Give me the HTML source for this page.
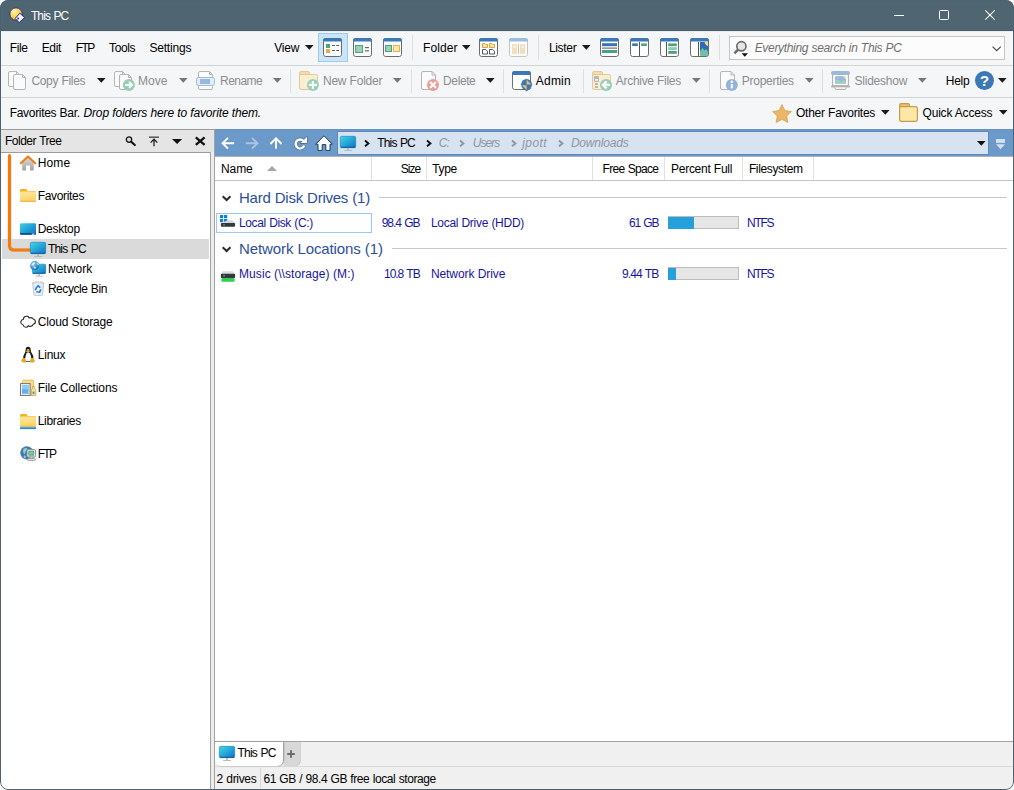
<!DOCTYPE html>
<html><head><meta charset="utf-8"><title>This PC</title>
<style>
html,body{margin:0;padding:0;background:#fff;}
body{width:1014px;height:790px;position:relative;overflow:hidden;font-family:'Liberation Sans', sans-serif;}
#win{position:absolute;left:0;top:0;width:1014px;height:790px;overflow:hidden;border-radius:8px;background:#f5f6f7;}
#frame{position:absolute;left:0;top:0;width:1012px;height:788px;border:1px solid #4c6270;border-radius:8px;pointer-events:none;}
.t{position:absolute;white-space:pre;font-family:'Liberation Sans', sans-serif;}
svg{position:absolute;overflow:visible;}
</style></head><body>
<div id="win">
<div style="position:absolute;left:0px;top:0px;width:1014px;height:31px;background:#4f6572;"></div>
<div style="position:absolute;left:0px;top:31px;width:1014px;height:98px;background:#f5f6f7;"></div>
<div style="position:absolute;left:0px;top:30px;width:1014px;height:1px;background:#485e6c;"></div>
<div style="position:absolute;left:1px;top:31px;width:1012px;height:1px;background:#e9eaeb;"></div>
<div style="position:absolute;left:1px;top:65px;width:1012px;height:1px;background:#d2d3d4;"></div>
<div style="position:absolute;left:1px;top:97px;width:1012px;height:1px;background:#d2d3d4;"></div>
<div style="position:absolute;left:0px;top:129px;width:1014px;height:661px;background:#f0f0f0;"></div>
<div style="position:absolute;left:0px;top:129px;width:215px;height:1px;background:#9c9c9c;"></div>
<div style="position:absolute;left:1px;top:130px;width:213px;height:22px;background:#e5e5e5;"></div>
<div style="position:absolute;left:1px;top:152px;width:210px;height:1px;background:#9c9c9c;"></div>
<div style="position:absolute;left:1px;top:153px;width:209px;height:636px;background:#fff;"></div>
<div style="position:absolute;left:210px;top:152px;width:1px;height:637px;background:#a3a3a3;"></div>
<div style="position:absolute;left:211px;top:153px;width:3px;height:636px;background:#ececec;"></div>
<div style="position:absolute;left:214px;top:129px;width:1px;height:660px;background:#a3a3a3;"></div>
<div style="position:absolute;left:2px;top:239px;width:207px;height:20px;background:#dadada;"></div>
<div style="position:absolute;left:215px;top:129px;width:798px;height:27px;background:#6b99c9;"></div>
<div style="position:absolute;left:215px;top:129px;width:798px;height:1px;background:#6a92c0;"></div>
<div style="position:absolute;left:215px;top:156px;width:798px;height:1px;background:#b2b2b2;"></div>
<div style="position:absolute;left:337px;top:131px;width:652px;height:24px;background:#d8e3f1;box-sizing:border-box;border:1px solid #5b89c0;"></div>
<div style="position:absolute;left:215px;top:157px;width:798px;height:584px;background:#fff;"></div>
<div style="position:absolute;left:371px;top:157px;width:1px;height:23px;background:#e2e2e2;"></div>
<div style="position:absolute;left:426px;top:157px;width:1px;height:23px;background:#e2e2e2;"></div>
<div style="position:absolute;left:592px;top:157px;width:1px;height:23px;background:#e2e2e2;"></div>
<div style="position:absolute;left:664px;top:157px;width:1px;height:23px;background:#e2e2e2;"></div>
<div style="position:absolute;left:742px;top:157px;width:1px;height:23px;background:#e2e2e2;"></div>
<div style="position:absolute;left:813px;top:157px;width:1px;height:23px;background:#e2e2e2;"></div>
<div style="position:absolute;left:215px;top:180px;width:798px;height:1px;background:#c6c6c6;"></div>
<div style="position:absolute;left:379px;top:197px;width:628px;height:1px;background:#c8c8c8;"></div>
<div style="position:absolute;left:392px;top:248px;width:615px;height:1px;background:#c8c8c8;"></div>
<div style="position:absolute;left:216px;top:213px;width:155px;height:19px;background:#fff;border:1px solid #99c9f5;box-sizing:content-box;width:154px;height:18px;"></div>
<div style="position:absolute;left:668px;top:216px;width:71px;height:13px;background:#e6e6e6;box-sizing:border-box;border:1px solid #bcbcbc;"></div>
<div style="position:absolute;left:668px;top:216.5px;width:26px;height:12px;background:#26a0da;"></div>
<div style="position:absolute;left:668px;top:267px;width:71px;height:13px;background:#e6e6e6;box-sizing:border-box;border:1px solid #bcbcbc;"></div>
<div style="position:absolute;left:668px;top:267.5px;width:8px;height:12px;background:#26a0da;"></div>
<div style="position:absolute;left:215px;top:741px;width:798px;height:1px;background:#a3a3a3;"></div>
<div style="position:absolute;left:215px;top:742px;width:798px;height:47px;background:#f0f0f0;"></div>
<div style="position:absolute;left:215px;top:766px;width:798px;height:1px;background:#d9d9d9;"></div>
<div style="position:absolute;left:284px;top:742px;width:16px;height:24px;background:#d8d8d8;border-radius:0 0 5px 0;box-shadow:0.6px 0 0 #bcbcbc;"></div>
<div style="position:absolute;left:215px;top:742px;width:68px;height:24px;background:#fff;border-radius:0 0 6px 6px;box-shadow:1px 0 1.5px #8e8e8e;"></div>
<div style="position:absolute;left:260px;top:768px;width:1px;height:20px;background:#d6d6d6;"></div>
<div style="position:absolute;left:894px;top:15px;width:10px;height:1px;background:#fff;"></div>
<div style="position:absolute;left:939px;top:10px;width:10px;height:10px;background:transparent;box-sizing:border-box;border:1px solid #fff;border-radius:1.5px;"></div>
<svg style="left:985px;top:10px;" width="10" height="10" viewBox="0 0 10 10"><path d="M0.3 0.3L9.7 9.7M9.7 0.3L0.3 9.7" stroke="#fff" stroke-width="1.1" fill="none"/></svg>
<svg style="left:9px;top:7px;" width="17" height="17" viewBox="0 0 17 17">
<defs><radialGradient id="dg43" cx="0.35" cy="0.3" r="0.8"><stop offset="0" stop-color="#fff3b0"/><stop offset="0.6" stop-color="#f7cf4a"/><stop offset="1" stop-color="#e9b530"/></radialGradient></defs>
<circle cx="7" cy="7" r="6.2" fill="url(#dg43)" stroke="#27277e" stroke-width="0.9"/>
<path d="M10.8 6.2L15.6 10.6L10.2 15.6L6.2 11.4Z" fill="#f3f3f6" stroke="#27277e" stroke-width="1"/>
<rect x="8.2" y="10.6" width="1.8" height="1.8" fill="#2a2ad0"/>
</svg>
<svg style="left:305.3px;top:45px;" width="8.6" height="4.8" viewBox="0 0 8.6 4.8"><path d="M0 0H8.6L4.3 4.8Z" fill="#1a1a1a"/></svg>
<svg style="left:461.5px;top:45px;" width="8.6" height="4.8" viewBox="0 0 8.6 4.8"><path d="M0 0H8.6L4.3 4.8Z" fill="#1a1a1a"/></svg>
<svg style="left:582.3000000000001px;top:45px;" width="8.6" height="4.8" viewBox="0 0 8.6 4.8"><path d="M0 0H8.6L4.3 4.8Z" fill="#1a1a1a"/></svg>
<svg style="left:96.5px;top:78px;" width="8.6" height="4.8" viewBox="0 0 8.6 4.8"><path d="M0 0H8.6L4.3 4.8Z" fill="#1a1a1a"/></svg>
<svg style="left:178.5px;top:78px;" width="8.6" height="4.8" viewBox="0 0 8.6 4.8"><path d="M0 0H8.6L4.3 4.8Z" fill="#777"/></svg>
<svg style="left:273.3px;top:78px;" width="8.6" height="4.8" viewBox="0 0 8.6 4.8"><path d="M0 0H8.6L4.3 4.8Z" fill="#777"/></svg>
<svg style="left:393.3px;top:78px;" width="8.6" height="4.8" viewBox="0 0 8.6 4.8"><path d="M0 0H8.6L4.3 4.8Z" fill="#777"/></svg>
<svg style="left:692.3000000000001px;top:78px;" width="8.6" height="4.8" viewBox="0 0 8.6 4.8"><path d="M0 0H8.6L4.3 4.8Z" fill="#777"/></svg>
<svg style="left:805.3000000000001px;top:78px;" width="8.6" height="4.8" viewBox="0 0 8.6 4.8"><path d="M0 0H8.6L4.3 4.8Z" fill="#777"/></svg>
<svg style="left:918.1px;top:78px;" width="8.6" height="4.8" viewBox="0 0 8.6 4.8"><path d="M0 0H8.6L4.3 4.8Z" fill="#777"/></svg>
<svg style="left:486.3px;top:78px;" width="8.6" height="4.8" viewBox="0 0 8.6 4.8"><path d="M0 0H8.6L4.3 4.8Z" fill="#1a1a1a"/></svg>
<svg style="left:998.3px;top:78px;" width="8.6" height="4.8" viewBox="0 0 8.6 4.8"><path d="M0 0H8.6L4.3 4.8Z" fill="#1a1a1a"/></svg>
<svg style="left:881.3px;top:110px;" width="8.6" height="4.8" viewBox="0 0 8.6 4.8"><path d="M0 0H8.6L4.3 4.8Z" fill="#1a1a1a"/></svg>
<svg style="left:998.5px;top:110px;" width="8.6" height="4.8" viewBox="0 0 8.6 4.8"><path d="M0 0H8.6L4.3 4.8Z" fill="#1a1a1a"/></svg>
<div style="position:absolute;left:412px;top:35px;width:1px;height:25px;background:#dedfe0;"></div>
<div style="position:absolute;left:538px;top:35px;width:1px;height:25px;background:#dedfe0;"></div>
<div style="position:absolute;left:719px;top:35px;width:1px;height:25px;background:#dedfe0;"></div>
<div style="position:absolute;left:290px;top:69px;width:1px;height:24px;background:#dedfe0;"></div>
<div style="position:absolute;left:411px;top:69px;width:1px;height:24px;background:#dedfe0;"></div>
<div style="position:absolute;left:503px;top:69px;width:1px;height:24px;background:#dedfe0;"></div>
<div style="position:absolute;left:583px;top:69px;width:1px;height:24px;background:#dedfe0;"></div>
<div style="position:absolute;left:709px;top:69px;width:1px;height:24px;background:#dedfe0;"></div>
<div style="position:absolute;left:822px;top:69px;width:1px;height:24px;background:#dedfe0;"></div>
<div style="position:absolute;left:318px;top:33px;width:30px;height:29px;background:#cce4f7;box-sizing:border-box;border:1px solid #99cdf8;"></div>
<svg style="left:323px;top:38px;" width="19" height="19" viewBox="0 0 19 19"><rect x="0.5" y="0.5" width="18" height="18" rx="2.2" fill="#fff" stroke="#6b6b6b"/>
<path d="M0 3.6V2.4Q0 0 2.4 0H16.6Q19 0 19 2.4V3.6Z" fill="#3b78b5"/><rect x="3" y="6" width="4" height="4" fill="#4aa37a"/><rect x="3" y="11" width="4" height="4" fill="#e6aa52"/>
<rect x="9" y="7" width="3" height="1" fill="#5a5a5a"/><rect x="13.3" y="7" width="2.7" height="1" fill="#5a5a5a"/>
<rect x="9" y="12" width="3" height="1" fill="#5a5a5a"/><rect x="13.3" y="12" width="2.7" height="1" fill="#5a5a5a"/></svg>
<svg style="left:353px;top:38px;" width="19" height="19" viewBox="0 0 19 19"><rect x="0.5" y="0.5" width="18" height="18" rx="2.2" fill="#fff" stroke="#6b6b6b"/>
<path d="M0 3.6V2.4Q0 0 2.4 0H16.6Q19 0 19 2.4V3.6Z" fill="#3b78b5"/><rect x="2.6" y="7.5" width="7" height="7" fill="#9bd1b9" stroke="#4aa37a"/>
<rect x="12" y="9" width="4" height="1.2" fill="#666"/><rect x="12" y="12.2" width="4" height="1.2" fill="#666"/></svg>
<svg style="left:383px;top:38px;" width="19" height="19" viewBox="0 0 19 19"><rect x="0.5" y="0.5" width="18" height="18" rx="2.2" fill="#fff" stroke="#6b6b6b"/>
<path d="M0 3.6V2.4Q0 0 2.4 0H16.6Q19 0 19 2.4V3.6Z" fill="#3b78b5"/><rect x="2.5" y="7.5" width="6" height="6" fill="#9bd1b9" stroke="#4aa37a"/>
<rect x="10.5" y="7.5" width="6" height="6" fill="#ffe9a8" stroke="#e9b44c"/></svg>
<svg style="left:479px;top:38px;" width="19" height="19" viewBox="0 0 19 19"><rect x="0.5" y="0.5" width="18" height="18" rx="2.2" fill="#fff" stroke="#6b6b6b"/>
<path d="M0 3.6V2.4Q0 0 2.4 0H16.6Q19 0 19 2.4V3.6Z" fill="#3b78b5"/><path d="M3.5 9.5V5.5H6L6.8 6.5H8.5V9.5Z" fill="#ffe2a0" stroke="#d9a441" stroke-width="1"/>
<path d="M10.5 9.5V5.5H13L13.8 6.5H15.5V9.5Z" fill="#ffe2a0" stroke="#d9a441" stroke-width="1"/>
<path d="M3.5 16V11.5H6.7L8.5 13.2V16Z" fill="#fff" stroke="#555" stroke-width="1"/>
<path d="M10.5 16V11.5H13.7L15.5 13.2V16Z" fill="#fff" stroke="#555" stroke-width="1"/></svg>
<svg style="left:509px;top:38px;" width="19" height="19" viewBox="0 0 19 19"><rect x="0.5" y="0.5" width="18" height="18" rx="2.2" fill="#fff" stroke="#c4c4c4"/>
<path d="M0 3.6V2.4Q0 0 2.4 0H16.6Q19 0 19 2.4V3.6Z" fill="#9dbbdb"/><rect x="2.8" y="6" width="5.4" height="10" rx="1" fill="#f1dfbd"/><rect x="10.8" y="6" width="5.4" height="10" rx="1" fill="#f1dfbd"/>
<rect x="4.6" y="7.5" width="2" height="2.5" fill="#faf3e6"/><rect x="12.6" y="7.5" width="2" height="2.5" fill="#faf3e6"/>
<rect x="9" y="5.5" width="1" height="11" fill="#c9c9c9"/></svg>
<svg style="left:600px;top:38px;" width="19" height="19" viewBox="0 0 19 19"><rect x="0.5" y="0.5" width="18" height="18" rx="2.2" fill="#fff" stroke="#6b6b6b"/>
<path d="M0 3.6V2.4Q0 0 2.4 0H16.6Q19 0 19 2.4V3.6Z" fill="#3b78b5"/><rect x="2" y="5.2" width="15" height="3" fill="#3a74b4"/><rect x="2" y="9.6" width="15" height="1" fill="#555"/><rect x="2" y="12" width="15" height="3" fill="#4aa37a"/></svg>
<svg style="left:630px;top:38px;" width="19" height="19" viewBox="0 0 19 19"><rect x="0.5" y="0.5" width="18" height="18" rx="2.2" fill="#fff" stroke="#6b6b6b"/>
<path d="M0 3.6V2.4Q0 0 2.4 0H16.6Q19 0 19 2.4V3.6Z" fill="#3b78b5"/><rect x="9" y="4" width="1" height="14" fill="#555"/><rect x="2.2" y="5.4" width="5.6" height="2.6" fill="#3a74b4"/><rect x="11.2" y="5.4" width="5.6" height="2.6" fill="#4aa37a"/></svg>
<svg style="left:660px;top:38px;" width="19" height="19" viewBox="0 0 19 19"><rect x="0.5" y="0.5" width="18" height="18" rx="2.2" fill="#fff" stroke="#6b6b6b"/>
<path d="M0 3.6V2.4Q0 0 2.4 0H16.6Q19 0 19 2.4V3.6Z" fill="#3b78b5"/><rect x="6" y="4" width="1" height="14" fill="#555"/><rect x="8.2" y="5.4" width="8.6" height="2.8" fill="#4aa37a"/><rect x="8.2" y="9.2" width="8.6" height="2.8" fill="#8fcbb0"/><rect x="8.2" y="13" width="8.6" height="2.8" fill="#4aa37a"/></svg>
<svg style="left:690px;top:38px;" width="19" height="19" viewBox="0 0 19 19"><rect x="0.5" y="0.5" width="18" height="18" rx="2.2" fill="#fff" stroke="#6b6b6b"/>
<path d="M0 3.6V2.4Q0 0 2.4 0H16.6Q19 0 19 2.4V3.6Z" fill="#3b78b5"/><rect x="8" y="4" width="1" height="14" fill="#555"/><rect x="10" y="4" width="8" height="13.5" fill="#2e6cb5"/>
<path d="M14.5 4H18V8Q15.5 7.5 14.5 4Z" fill="#f5df8a"/><path d="M10 13L12.5 10L14.5 12.5L16 11L18 13.5V17.5H10Z" fill="#6fc2a0"/></svg>
<div style="position:absolute;left:729px;top:36px;width:276px;height:24px;background:#fcfcfc;box-sizing:border-box;border:1px solid #c4c6c6;"></div>
<svg style="left:732px;top:39px;" width="18" height="19" viewBox="0 0 18 19"><circle cx="9.4" cy="7.3" r="4.6" fill="#e6e6e6" stroke="#6c6c6c" stroke-width="1.7"/>
<path d="M6.1 10.7L2.4 14.4" stroke="#6c6c6c" stroke-width="2.6" stroke-linecap="butt"/>
<path d="M9.6 14.2H16L12.8 17.7Z" fill="#111"/></svg>
<svg style="left:992px;top:46px;" width="10" height="6" viewBox="0 0 10 6"><path d="M0.6 0.6L4.7 4.7L8.8 0.6" stroke="#444" stroke-width="1.1" fill="none"/></svg>
<svg style="left:8px;top:71px;" width="18" height="19" viewBox="0 0 18 19"><g><path d="M2 0.5H8.5L11.5 3.5V14Q11.5 15.5 10 15.5H2Q0.5 15.5 0.5 14V2Q0.5 0.5 2 0.5Z" fill="#fbfbfb" stroke="#b5b5b5" stroke-width="1"/><path d="M8.5 0.5V3.5H11.5" fill="none" stroke="#b5b5b5" stroke-width="1"/></g><g transform="translate(5,3)"><path d="M2 0.5H9.5L12.5 3.5V14Q12.5 15.5 11 15.5H2Q0.5 15.5 0.5 14V2Q0.5 0.5 2 0.5Z" fill="#fbfbfb" stroke="#b5b5b5" stroke-width="1"/><path d="M9.5 0.5V3.5H12.5" fill="none" stroke="#b5b5b5" stroke-width="1"/></g></svg>
<svg style="left:114px;top:71px;" width="22" height="21" viewBox="0 0 22 21"><g><path d="M2 0.5H8.5L11.5 3.5V14Q11.5 15.5 10 15.5H2Q0.5 15.5 0.5 14V2Q0.5 0.5 2 0.5Z" fill="#fbfbfb" stroke="#b5b5b5" stroke-width="1"/><path d="M8.5 0.5V3.5H11.5" fill="none" stroke="#b5b5b5" stroke-width="1"/></g><g transform="translate(5,3)"><path d="M2 0.5H9.5L12.5 3.5V14Q12.5 15.5 11 15.5H2Q0.5 15.5 0.5 14V2Q0.5 0.5 2 0.5Z" fill="#fbfbfb" stroke="#b5b5b5" stroke-width="1"/><path d="M9.5 0.5V3.5H12.5" fill="none" stroke="#b5b5b5" stroke-width="1"/></g><circle cx="14.9" cy="13.9" r="6" fill="#97cfb6"/><path d="M11.2 13.9H17.8M15 10.9L18 13.9L15 16.9" stroke="#fff" stroke-width="2" fill="none"/></svg>
<svg style="left:196px;top:71px;" width="19" height="19" viewBox="0 0 19 19"><g transform="translate(2,0)"><path d="M2 0.5H11.5L14.5 3.5V17Q14.5 18.5 13 18.5H2Q0.5 18.5 0.5 17V2Q0.5 0.5 2 0.5Z" fill="#fbfbfb" stroke="#b5b5b5" stroke-width="1"/><path d="M11.5 0.5V3.5H14.5" fill="none" stroke="#b5b5b5" stroke-width="1"/></g><rect x="0.5" y="6.5" width="18" height="8" rx="2" fill="#e0eefb" stroke="#9bbbe0"/><rect x="4" y="8" width="10" height="5" fill="#9ab7d8"/></svg>
<svg style="left:299px;top:71px;" width="21" height="21" viewBox="0 0 21 21"><path d="M0.5 4V2Q0.5 0.5 2 0.5H9Q10.5 0.5 10.5 2V4Z" fill="#f3dcae" stroke="#e3c898"/><rect x="0.5" y="3.5" width="18" height="15" rx="1.6" fill="#fbeed0" stroke="#e3c898"/><circle cx="13.9" cy="13.9" r="6" fill="#9bd0b8"/><path d="M13.9 9.9V17.9M9.9 13.9H17.9" stroke="#fff" stroke-width="2.1" fill="none"/></svg>
<svg style="left:421px;top:71px;" width="20" height="21" viewBox="0 0 20 21"><g><path d="M2 0.5H11L14.5 4V17Q14.5 18.5 13 18.5H2Q0.5 18.5 0.5 17V2Q0.5 0.5 2 0.5Z" fill="#fbfbfb" stroke="#b5b5b5" stroke-width="1"/><path d="M11 0.5V4H14.5" fill="none" stroke="#b5b5b5" stroke-width="1"/></g><circle cx="12" cy="13.9" r="6" fill="#e7a096"/><path d="M9.1 11L14.9 16.8M14.9 11L9.1 16.8" stroke="#fff" stroke-width="2.2" fill="none"/></svg>
<svg style="left:512px;top:71px;" width="22" height="21" viewBox="0 0 22 21"><rect x="0.5" y="0.5" width="18" height="18" rx="2.2" fill="#fff" stroke="#6e6e6e" stroke-width="1"/><path d="M0 4V2.4Q0 0 2.4 0H16.6Q19 0 19 2.4V4Z" fill="#3b78b5"/><path d="M14.6 8L18.5 9.6L20 13.4L18.5 17.4L14.6 19.9L10.7 17.4L9.2 13.4L10.7 9.6Z" fill="#3878ba" stroke="#3878ba" stroke-width="0.5" stroke-linejoin="round"/><path d="M14.6 8.8V13.5H19.3Z" fill="#f4bc5a"/><path d="M14.6 14.2V19L9.9 14.2Z" fill="#f4bc5a"/></svg>
<svg style="left:592px;top:71px;" width="21" height="21" viewBox="0 0 21 21"><path d="M0.5 4V2Q0.5 0.5 2 0.5H9Q10.5 0.5 10.5 2V4Z" fill="#f3dcae" stroke="#e3c898"/><rect x="0.5" y="3.5" width="18" height="15" rx="1.6" fill="#fbeed0" stroke="#e3c898"/><rect x="2.1" y="5.2" width="4.7" height="5.6" fill="#a9aab4"/><rect x="3" y="8" width="2.9" height="1.7" fill="#fff"/><rect x="2.6" y="6.3" width="3.7" height="0.6" fill="#c4c5cc"/><rect x="3" y="12.2" width="2.9" height="1.7" fill="#a9aab4"/><rect x="3" y="15.1" width="2.9" height="1.7" fill="#a9aab4"/><circle cx="14" cy="13.9" r="6" fill="#97cfb6"/><path d="M17.8 13.9H11.4M14.6 10.4L11 13.9L14.6 17.4" stroke="#fff" stroke-width="2.4" fill="none"/></svg>
<svg style="left:720px;top:71px;" width="20" height="21" viewBox="0 0 20 21"><g><path d="M2 0.5H11L14.5 4V17Q14.5 18.5 13 18.5H2Q0.5 18.5 0.5 17V2Q0.5 0.5 2 0.5Z" fill="#fbfbfb" stroke="#b5b5b5" stroke-width="1"/><path d="M11 0.5V4H14.5" fill="none" stroke="#b5b5b5" stroke-width="1"/></g><circle cx="11.8" cy="13.9" r="6" fill="#94b4db"/><rect x="10.8" y="13" width="2" height="4.4" fill="#fff"/><circle cx="11.8" cy="10.8" r="1.2" fill="#fff"/></svg>
<svg style="left:831px;top:71px;" width="19" height="19" viewBox="0 0 19 19"><rect x="1.6" y="3" width="15.8" height="11.6" fill="#fff" stroke="#b3b3b3" stroke-width="1.2"/><rect x="0" y="0" width="19" height="4" rx="2" fill="#9cb9d9"/><rect x="4" y="5.2" width="11" height="7.6" fill="#9cb9d9"/><path d="M4 10.4L6.6 8L10 11.4L12.4 9.2L15 11.6V12.8H4Z" fill="#a3d3be"/><path d="M12 5.2H15V8.2Z" fill="#fde9a8"/><rect x="0" y="14.4" width="19" height="2.1" rx="1" fill="#b3b3b3"/><path d="M3.6 16.4L4.6 18.5H14.4L15.4 16.4" fill="#f0f0f0" stroke="#b3b3b3" stroke-width="1"/></svg>
<svg style="left:975px;top:71px;" width="19" height="19" viewBox="0 0 19 19"><circle cx="9.5" cy="9.5" r="9.5" fill="#3b78b5"/><text x="9.5" y="15" text-anchor="middle" font-family="Liberation Sans, sans-serif" font-weight="bold" font-size="15.4" fill="#fff">?</text></svg>
<svg style="left:772px;top:103.5px;" width="20" height="19" viewBox="0 0 20 19"><path d="M10 0.6L12.9 6.6L19.4 7.5L14.7 12L15.9 18.5L10 15.4L4.1 18.5L5.3 12L0.6 7.5L7.1 6.6Z" fill="#e9b766" stroke="#d4a256" stroke-width="0.8" stroke-linejoin="round"/></svg>
<svg style="left:899px;top:103px;" width="19" height="19" viewBox="0 0 19 19"><path d="M0.6 4V2Q0.6 0.6 2 0.6H9Q10.4 0.6 10.4 2V4Z" fill="#efbf6c" stroke="#c99a4e" stroke-width="1.2"/><rect x="0.6" y="3.6" width="17.8" height="14.8" rx="1.8" fill="#fee7a6" stroke="#c99a4e" stroke-width="1.2"/></svg>
<svg style="left:125px;top:136px;" width="12" height="11" viewBox="0 0 12 11"><circle cx="4" cy="3.6" r="2.7" fill="#dcdcdc" stroke="#111" stroke-width="1.3"/><path d="M6.2 5.8L9.8 9" stroke="#111" stroke-width="2.2" stroke-linecap="round"/></svg>
<svg style="left:149px;top:136px;" width="11" height="11" viewBox="0 0 11 11"><rect x="0" y="0.6" width="10" height="1.1" fill="#222"/><path d="M5 3.4V10.2M1.6 6.6L5 3.2L8.4 6.6" stroke="#222" stroke-width="1.3" fill="none"/></svg>
<svg style="left:172px;top:139px;" width="10.2" height="5" viewBox="0 0 10.2 5"><path d="M0 0H10.2L5.1 5Z" fill="#111"/></svg>
<svg style="left:195px;top:137px;" width="11" height="9" viewBox="0 0 11 9"><path d="M0.8 0.4L9.6 7.8M9.6 0.4L0.8 7.8" stroke="#111" stroke-width="2.3" fill="none"/></svg>
<svg style="left:221px;top:137px;" width="14" height="12" viewBox="0 0 14 12"><path d="M13.2 6.2H1.8M7 0.8L1.6 6.2L7 11.6" stroke="#fff" stroke-width="1.9" fill="none"/></svg>
<svg style="left:245px;top:137px;" width="14" height="12" viewBox="0 0 14 12"><path d="M0.8 6.2H12.2M7 0.8L12.4 6.2L7 11.6" stroke="#a9c5e4" stroke-width="1.9" fill="none"/></svg>
<svg style="left:269px;top:137px;" width="14" height="12" viewBox="0 0 14 12"><path d="M7 11.8V1.6M1.4 7L7 1.4L12.6 7" stroke="#fff" stroke-width="1.9" fill="none"/></svg>
<svg style="left:293px;top:135.5px;" width="15" height="15" viewBox="0 0 15 15"><g opacity="0.55"><path d="M10.6 5A4.5 4.5 0 1 0 11.3 9.6" stroke="#1f3a5c" stroke-width="3.6" fill="none"/><path d="M14 0.6V7.2H7.4Z" fill="#1f3a5c" stroke="#1f3a5c" stroke-width="1"/></g><path d="M10.6 5A4.5 4.5 0 1 0 11.3 9.6" stroke="#fff" stroke-width="2.5" fill="none"/><path d="M14 0.8V7H7.8Z" fill="#fff"/></svg>
<svg style="left:315px;top:134.5px;" width="18" height="16" viewBox="0 0 18 16"><path d="M9 0.8L17.4 9.2H15V15.4H10.8V9.6H7.2V15.4H3V9.2H0.6Z" fill="#fff" stroke="#1f3a5c" stroke-width="1" stroke-linejoin="miter"/></svg>
<svg style="left:340px;top:136px;" width="16" height="15" viewBox="0 0 16 15"><defs><linearGradient id="mg101" x1="0" y1="0" x2="1" y2="1"><stop offset="0" stop-color="#40d8e8"/><stop offset="0.55" stop-color="#22a2d6"/><stop offset="1" stop-color="#1570c0"/></linearGradient></defs>
<rect x="0.3" y="0.3" width="15.4" height="11.4" rx="1.4" fill="url(#mg101)" stroke="#1a7fae" stroke-width="0.6"/><rect x="0.6" y="10.8" width="14.8" height="1" rx="0.5" fill="#0f5aa0"/>
<rect x="7.2" y="12" width="1.6" height="2.4" fill="#b0b6bc"/><rect x="4.2" y="14" width="7.8" height="0.9" fill="#b0b6bc"/></svg>
<svg style="left:363.5px;top:140px;" width="6" height="7" viewBox="0 0 6 7"><path d="M1 0.6L4.4 3.4L1 6.2" stroke="#111" stroke-width="1.9" fill="none"/></svg>
<svg style="left:425.5px;top:140px;" width="6" height="7" viewBox="0 0 6 7"><path d="M1 0.6L4.4 3.4L1 6.2" stroke="#111" stroke-width="1.9" fill="none"/></svg>
<svg style="left:459.3px;top:140px;" width="6" height="7" viewBox="0 0 6 7"><path d="M1 0.6L4.4 3.4L1 6.2" stroke="#8d96a3" stroke-width="1.9" fill="none"/></svg>
<svg style="left:510.6px;top:140px;" width="6" height="7" viewBox="0 0 6 7"><path d="M1 0.6L4.4 3.4L1 6.2" stroke="#8d96a3" stroke-width="1.9" fill="none"/></svg>
<svg style="left:557.5px;top:140px;" width="6" height="7" viewBox="0 0 6 7"><path d="M1 0.6L4.4 3.4L1 6.2" stroke="#8d96a3" stroke-width="1.9" fill="none"/></svg>
<svg style="left:976.6px;top:141px;" width="8.6" height="4.8" viewBox="0 0 8.6 4.8"><path d="M0 0H8.6L4.3 4.8Z" fill="#111"/></svg>
<svg style="left:996px;top:139px;" width="9" height="11" viewBox="0 0 9 11"><rect x="0" y="0" width="9" height="3.9" fill="#d3e0f1"/><path d="M0 5.2H9L4.5 10.2Z" fill="#d3e0f1"/></svg>
<svg style="left:266.5px;top:166px;" width="10" height="5" viewBox="0 0 10 5"><path d="M0 5H10L5 0Z" fill="#a6a6a6"/></svg>
<svg style="left:222px;top:195px;" width="10" height="7" viewBox="0 0 10 7"><path d="M0.7 1.2L4.6 5L8.5 1.2" stroke="#2b2b2b" stroke-width="2" fill="none"/></svg>
<svg style="left:222px;top:246px;" width="10" height="7" viewBox="0 0 10 7"><path d="M0.7 1.2L4.6 5L8.5 1.2" stroke="#2b2b2b" stroke-width="2" fill="none"/></svg>
<svg style="left:6px;top:153.5px;" width="26" height="100" viewBox="0 0 26 100"><path d="M3.5 1.5V91.5Q3.5 96 8 96H24" stroke="#c9b6e8" stroke-width="4.2" fill="none" opacity="0.55"/><path d="M3.5 1.5V91.5Q3.5 96 8 96H24" stroke="#f57c00" stroke-width="3" fill="none" stroke-linecap="round"/></svg>
<svg style="left:20px;top:155px;" width="16" height="16" viewBox="0 0 16 16"><defs><linearGradient id="hg113" x1="0" y1="0" x2="0" y2="1"><stop offset="0" stop-color="#dcdcdc"/><stop offset="1" stop-color="#a2a2a2"/></linearGradient></defs>
<path d="M2.2 7.4L8 2.2L13.8 7.4V14.6Q13.8 15.6 12.8 15.6H10V10.6H6V15.6H3.2Q2.2 15.6 2.2 14.6Z" fill="url(#hg113)"/>
<path d="M0.8 8.2L8 1.6L15.2 8.2" stroke="#ee7a10" stroke-width="2" fill="none" stroke-linecap="round" stroke-linejoin="round"/></svg>
<svg style="left:20px;top:189px;" width="16" height="16" viewBox="0 0 16 16"><defs><linearGradient id="fg114" x1="0" y1="0" x2="0.3" y2="1"><stop offset="0" stop-color="#ffe9a2"/><stop offset="1" stop-color="#ffd466"/></linearGradient></defs>
<path d="M0 1.4Q0 0 1.4 0H5.6Q6.4 0 6.9 0.7L7.8 2H14.6Q16 2 16 3.4V5H0Z" fill="#f4b31c"/>
<rect x="0" y="2.6" width="16" height="10" rx="1" fill="url(#fg114)"/>
<rect x="0" y="11.8" width="16" height="0.9" rx="0.4" fill="#eea93a"/></svg>
<svg style="left:20px;top:223px;" width="16" height="12" viewBox="0 0 16 12"><defs><linearGradient id="dk115" x1="0" y1="0" x2="1" y2="1"><stop offset="0" stop-color="#3fd0e4"/><stop offset="0.55" stop-color="#1f9bd6"/><stop offset="1" stop-color="#1672bf"/></linearGradient></defs>
<rect x="0" y="0.3" width="16" height="11.4" rx="1.2" fill="url(#dk115)"/><path d="M0 10V10.5Q0 11.7 1.2 11.7H14.8Q16 11.7 16 10.5V10Z" fill="#0d4f93"/><rect x="11.8" y="10.6" width="2.8" height="1.1" fill="#e8f4ff"/></svg>
<svg style="left:30px;top:242px;" width="16" height="15" viewBox="0 0 16 15"><defs><linearGradient id="mg116" x1="0" y1="0" x2="1" y2="1"><stop offset="0" stop-color="#40d8e8"/><stop offset="0.55" stop-color="#22a2d6"/><stop offset="1" stop-color="#1570c0"/></linearGradient></defs>
<rect x="0.3" y="0.3" width="15.4" height="11.4" rx="1.4" fill="url(#mg116)" stroke="#1a7fae" stroke-width="0.6"/><rect x="0.6" y="10.8" width="14.8" height="1" rx="0.5" fill="#0f5aa0"/>
<rect x="7.2" y="12" width="1.6" height="2.4" fill="#b0b6bc"/><rect x="4.2" y="14" width="7.8" height="0.9" fill="#b0b6bc"/></svg>
<svg style="left:30px;top:261px;" width="16" height="16" viewBox="0 0 16 16"><defs><linearGradient id="ng117" x1="0" y1="0" x2="1" y2="1"><stop offset="0" stop-color="#40d8e8"/><stop offset="0.55" stop-color="#22a2d6"/><stop offset="1" stop-color="#1570c0"/></linearGradient>
<radialGradient id="gl117" cx="0.35" cy="0.3" r="0.8"><stop offset="0" stop-color="#8fd0f0"/><stop offset="0.6" stop-color="#3a8fd0"/><stop offset="1" stop-color="#1f63a8"/></radialGradient></defs>
<rect x="2.5" y="3.2" width="13.2" height="9.4" rx="1.2" fill="url(#ng117)" stroke="#1a7fae" stroke-width="0.6"/><rect x="2.8" y="11.8" width="12.6" height="0.9" rx="0.4" fill="#0f5aa0"/>
<rect x="8.3" y="12.8" width="1.6" height="2.2" fill="#b0b6bc"/><rect x="5.4" y="14.7" width="7.4" height="0.9" fill="#b0b6bc"/>
<circle cx="4.7" cy="4.7" r="4.6" fill="url(#gl117)"/>
<path d="M1.6 3.2Q3 1.4 5.2 1.2Q5.6 2.4 4.4 3Q3.6 4.6 2.4 4.4Q1.4 4.4 1.6 3.2ZM3.2 5.6Q4.6 5.2 5.6 6.2Q6.2 7.4 5 7.8Q3.6 7.2 3.2 5.6ZM6.8 1.6Q8.4 2.4 8.8 4Q8 4.6 7.4 3.6Q6.4 2.8 6.8 1.6Z" fill="#eef7ff" opacity="0.92"/></svg>
<svg style="left:32px;top:281px;" width="13" height="15" viewBox="0 0 13 15"><defs><linearGradient id="rb118" x1="0" y1="0" x2="1" y2="0"><stop offset="0" stop-color="#dfe4ea"/><stop offset="0.5" stop-color="#f6f8fa"/><stop offset="1" stop-color="#d9dfe6"/></linearGradient></defs>
<path d="M0.6 1.8H11.8L10.6 13.4Q10.5 14.4 9.5 14.4H2.9Q1.9 14.4 1.8 13.4Z" fill="url(#rb118)" stroke="#b9c1ca" stroke-width="0.8"/>
<path d="M0.8 1.6Q3 0.6 6.2 0.6Q9.4 0.6 11.6 1.6" stroke="#aeb6bf" stroke-width="0.8" fill="none" stroke-dasharray="1.6 0.8"/>
<path d="M4 7.2L6.2 4.6L8.2 6.8M8.8 8.4L7.6 11.2L4.4 10.8M3.4 9.2L4 7.2" stroke="#1e7fe0" stroke-width="1.6" fill="none"/></svg>
<svg style="left:20px;top:315px;" width="17" height="14" viewBox="0 0 17 14"><path d="M0.7 7Q1.2 4.6 3.4 4.3Q3.4 1.3 6.3 1.2Q8.3 1 9.2 2.9Q11.4 1.9 12.9 3.7Q15.3 4.4 15.5 6.6Q15.4 8.7 13.3 9.2Q12.7 11.4 10.4 11.4Q9 11.6 8.2 10.7Q7.4 12.4 5.6 12.2Q3.6 12 3.2 10Q0.9 9.5 0.7 7Z" fill="#fff" stroke="#2a2a2a" stroke-width="1.15" stroke-linejoin="round"/></svg>
<svg style="left:21px;top:346px;" width="15" height="17" viewBox="0 0 15 17"><path d="M4.7 3.4Q4.7 0.8 7.1 0.8Q9.6 0.8 9.6 3.6Q9.7 5.8 11 7.6Q12.8 10 12.3 12.4L2.1 12.6Q1.8 10.4 3.3 8Q4.7 5.8 4.7 3.4Z" fill="#1a1a1a"/>
<path d="M7.1 6.2Q5.6 6.8 4.7 9.4Q3.9 12.2 4.4 15.4H9.8Q10.8 12.2 9.8 9.4Q8.8 6.8 7.1 6.2Z" fill="#fff"/>
<rect x="4.8" y="15.2" width="4.8" height="0.8" fill="#3a3a3a"/>
<ellipse cx="7.1" cy="3.7" rx="1.3" ry="0.7" fill="#c9ccd0"/>
<ellipse cx="7" cy="5.4" rx="1.9" ry="1.1" fill="#e8b020"/>
<path d="M0.3 14.6Q0.5 12.2 2.6 12Q4.6 12.4 5.4 14.8Q5.6 16.6 3.4 16.7Q0.5 16.6 0.3 14.6Z" fill="#e5ab1a"/>
<path d="M9 14.8Q9.4 12.2 11.6 12Q13.3 12.2 13.8 14.4Q13.7 16.6 11 16.7Q9 16.6 9 14.8Z" fill="#e5ab1a"/></svg>
<svg style="left:20px;top:380px;" width="17" height="16" viewBox="0 0 17 16"><path d="M2.4 1.4Q2.4 0.2 3.6 0.2H12.4Q13.6 0.2 13.6 1.4V15.4H2.4Z" fill="#fbdc84" stroke="#e2b13c" stroke-width="0.8"/>
<rect x="0.5" y="3.6" width="9.6" height="11.8" fill="#f2f6fb" stroke="#6f747a" stroke-width="1"/>
<rect x="2" y="5.2" width="6.6" height="8.6" fill="#5fb0f0"/><rect x="2" y="5.2" width="6.6" height="4" fill="#8ccbf8"/>
<path d="M12.6 6.2H14.2V8.2L15.8 10V15.6H11.4V10L12.6 8.2Z" fill="#fbe09a" stroke="#d9a334" stroke-width="0.8"/><rect x="12.6" y="11.6" width="1.8" height="2.4" fill="#3b8fe0"/></svg>
<svg style="left:20px;top:414px;" width="16" height="16" viewBox="0 0 16 16"><defs><linearGradient id="fg122" x1="0" y1="0" x2="0.3" y2="1"><stop offset="0" stop-color="#ffe9a2"/><stop offset="1" stop-color="#ffd466"/></linearGradient></defs>
<path d="M0 1.4Q0 0 1.4 0H5.6Q6.4 0 6.9 0.7L7.8 2H14.6Q16 2 16 3.4V5H0Z" fill="#f4b31c"/>
<rect x="0" y="2.6" width="16" height="10" rx="1" fill="url(#fg122)"/>
<rect x="0" y="11.8" width="16" height="0.9" rx="0.4" fill="#eea93a"/><rect x="0" y="13.2" width="16" height="1.9" fill="#1f8fe3"/></svg>
<svg style="left:20px;top:446px;" width="17" height="16" viewBox="0 0 17 16"><circle cx="6.8" cy="6.8" r="6.6" fill="#3f79b9"/>
<path d="M3.4 3Q5.6 1.6 7.2 2.4Q6.8 4.4 5.4 5.4Q5.6 7.6 4.2 8.2Q2.4 6.4 3.4 3ZM4 9.6Q5.6 9.4 6 11Q5.4 12.6 4 12.2Q3.2 10.8 4 9.6Z" fill="#93d2b4"/>
<rect x="7" y="3.6" width="8.6" height="7.4" rx="1.2" fill="#fafafa" stroke="#8a8a8a" stroke-width="1"/>
<rect x="8.8" y="5.2" width="5" height="4" fill="#7fc6a2" stroke="#3f9a72" stroke-width="0.8"/>
<rect x="9.6" y="11" width="3.4" height="1.6" fill="#e4e4e4" stroke="#8a8a8a" stroke-width="0.7"/><rect x="7.6" y="12.6" width="7.6" height="1.8" rx="0.6" fill="#f0f0f0" stroke="#8a8a8a" stroke-width="0.8"/></svg>
<svg style="left:220px;top:215px;" width="16" height="13" viewBox="0 0 16 13"><rect x="0" y="0" width="3.2" height="3.2" fill="#0c80da"/><rect x="4" y="0" width="3.2" height="3.2" fill="#0c80da"/>
<rect x="0" y="4" width="3.2" height="3.2" fill="#0c80da"/><rect x="4" y="4" width="3.2" height="3.2" fill="#0c80da"/>
<path d="M7.6 5.2H12.6L15 8.2H1Z" fill="#d3d6da"/><rect x="0.9" y="8" width="14.2" height="3.8" rx="0.8" fill="#34373c"/><rect x="3.4" y="9.3" width="1.3" height="1.2" fill="#4be36e"/></svg>
<svg style="left:220px;top:270px;" width="16" height="13" viewBox="0 0 16 13"><path d="M3 1.2H12.8L15 4H1Z" fill="#d9dcdf"/><rect x="0.9" y="3.8" width="14.2" height="4.2" rx="0.8" fill="#34373c"/><rect x="3.4" y="5.2" width="1.3" height="1.2" fill="#4be36e"/>
<rect x="0" y="9.6" width="16" height="0.8" fill="#b7bcc1"/><rect x="1.6" y="7.9" width="12.8" height="3.9" rx="0.6" fill="#2fcf52"/></svg>
<svg style="left:219px;top:746px;" width="16" height="15" viewBox="0 0 16 15"><defs><linearGradient id="mg126" x1="0" y1="0" x2="1" y2="1"><stop offset="0" stop-color="#40d8e8"/><stop offset="0.55" stop-color="#22a2d6"/><stop offset="1" stop-color="#1570c0"/></linearGradient></defs>
<rect x="0.3" y="0.3" width="15.4" height="11.4" rx="1.4" fill="url(#mg126)" stroke="#1a7fae" stroke-width="0.6"/><rect x="0.6" y="10.8" width="14.8" height="1" rx="0.5" fill="#0f5aa0"/>
<rect x="7.2" y="12" width="1.6" height="2.4" fill="#b0b6bc"/><rect x="4.2" y="14" width="7.8" height="0.9" fill="#b0b6bc"/></svg>
<svg style="left:287px;top:750px;" width="8" height="8" viewBox="0 0 8 8"><path d="M4 0.2V7.8M0.2 4H7.8" stroke="#6c6c6c" stroke-width="2" fill="none"/></svg>
<span class="t" style="left:30.9px;top:9.8px;font-size:12px;line-height:12px;letter-spacing:-0.865px;word-spacing:0.865px;color:#fff;">This PC</span>
<span class="t" style="left:9.7px;top:41.8px;font-size:12px;line-height:12px;letter-spacing:-0.361px;word-spacing:0.361px;color:#000;">File</span>
<span class="t" style="left:41.7px;top:41.8px;font-size:12px;line-height:12px;letter-spacing:-0.322px;word-spacing:0.322px;color:#000;">Edit</span>
<span class="t" style="left:75.8px;top:41.8px;font-size:12px;line-height:12px;letter-spacing:-1.557px;word-spacing:1.557px;color:#000;">FTP</span>
<span class="t" style="left:109.0px;top:41.8px;font-size:12px;line-height:12px;letter-spacing:-0.363px;word-spacing:0.363px;color:#000;">Tools</span>
<span class="t" style="left:149.4px;top:41.8px;font-size:12px;line-height:12px;letter-spacing:-0.195px;word-spacing:0.195px;color:#000;">Settings</span>
<span class="t" style="left:274.3px;top:41.8px;font-size:12px;line-height:12px;letter-spacing:-0.249px;word-spacing:0.249px;color:#000;">View</span>
<span class="t" style="left:423.0px;top:41.8px;font-size:12px;line-height:12px;letter-spacing:0.097px;word-spacing:-0.097px;color:#000;">Folder</span>
<span class="t" style="left:548.9px;top:41.8px;font-size:12px;line-height:12px;letter-spacing:-0.307px;word-spacing:0.307px;color:#000;">Lister</span>
<span class="t" style="left:754.7px;top:41.8px;font-size:12px;line-height:12px;letter-spacing:-0.326px;word-spacing:0.326px;color:#707070;font-style:italic;">Everything search in This PC</span>
<span class="t" style="left:31.4px;top:74.8px;font-size:12px;line-height:12px;letter-spacing:-0.310px;word-spacing:0.310px;color:#8b8d92;">Copy Files</span>
<span class="t" style="left:138.0px;top:74.8px;font-size:12px;line-height:12px;letter-spacing:0.039px;word-spacing:-0.039px;color:#8b8d92;">Move</span>
<span class="t" style="left:220.1px;top:74.8px;font-size:12px;line-height:12px;letter-spacing:-0.577px;word-spacing:0.577px;color:#8b8d92;">Rename</span>
<span class="t" style="left:323.0px;top:74.8px;font-size:12px;line-height:12px;letter-spacing:-0.240px;word-spacing:0.240px;color:#8b8d92;">New Folder</span>
<span class="t" style="left:443.1px;top:74.8px;font-size:12px;line-height:12px;letter-spacing:-0.398px;word-spacing:0.398px;color:#8b8d92;">Delete</span>
<span class="t" style="left:535.8px;top:74.8px;font-size:12px;line-height:12px;letter-spacing:0.217px;word-spacing:-0.217px;color:#000;">Admin</span>
<span class="t" style="left:615.8px;top:74.8px;font-size:12px;line-height:12px;letter-spacing:-0.299px;word-spacing:0.299px;color:#8b8d92;">Archive Files</span>
<span class="t" style="left:741.8px;top:74.8px;font-size:12px;line-height:12px;letter-spacing:-0.270px;word-spacing:0.270px;color:#8b8d92;">Properties</span>
<span class="t" style="left:854.6px;top:74.8px;font-size:12px;line-height:12px;letter-spacing:-0.245px;word-spacing:0.245px;color:#8b8d92;">Slideshow</span>
<span class="t" style="left:945.8px;top:74.8px;font-size:12px;line-height:12px;letter-spacing:-0.272px;word-spacing:0.272px;color:#000;">Help</span>
<span class="t" style="left:9.7px;top:106.8px;font-size:12px;line-height:12px;letter-spacing:-0.310px;word-spacing:0.310px;color:#000;">Favorites Bar.</span>
<span class="t" style="left:83.5px;top:106.8px;font-size:12px;line-height:12px;letter-spacing:-0.153px;word-spacing:0.153px;color:#000;font-style:italic;">Drop folders here to favorite them.</span>
<span class="t" style="left:796.0px;top:106.8px;font-size:12px;line-height:12px;letter-spacing:-0.257px;word-spacing:0.257px;color:#000;">Other Favorites</span>
<span class="t" style="left:922.6px;top:106.8px;font-size:12px;line-height:12px;letter-spacing:-0.221px;word-spacing:0.221px;color:#000;">Quick Access</span>
<span class="t" style="left:5.0px;top:134.8px;font-size:12px;line-height:12px;letter-spacing:-0.496px;word-spacing:0.496px;color:#000;">Folder Tree</span>
<span class="t" style="left:377.2px;top:136.8px;font-size:12px;line-height:12px;letter-spacing:-0.815px;word-spacing:0.815px;color:#000;">This PC</span>
<span class="t" style="left:438.7px;top:136.8px;font-size:12px;line-height:12px;letter-spacing:-0.900px;word-spacing:0.900px;color:#8d96a3;font-style:italic;">C:</span>
<span class="t" style="left:472.8px;top:136.8px;font-size:12px;line-height:12px;letter-spacing:-0.949px;word-spacing:0.949px;color:#8d96a3;font-style:italic;">Users</span>
<span class="t" style="left:522.3px;top:136.8px;font-size:12px;line-height:12px;letter-spacing:0.403px;word-spacing:-0.403px;color:#8d96a3;font-style:italic;">jpott</span>
<span class="t" style="left:570.9px;top:136.8px;font-size:12px;line-height:12px;letter-spacing:-0.186px;word-spacing:0.186px;color:#8d96a3;font-style:italic;">Downloads</span>
<span class="t" style="left:221.0px;top:162.8px;font-size:12px;line-height:12px;letter-spacing:-0.079px;word-spacing:0.079px;color:#000;">Name</span>
<span class="t" style="left:400.7px;top:162.8px;font-size:12px;line-height:12px;letter-spacing:-0.986px;word-spacing:0.986px;color:#000;">Size</span>
<span class="t" style="left:432.2px;top:162.8px;font-size:12px;line-height:12px;letter-spacing:-0.354px;word-spacing:0.354px;color:#000;">Type</span>
<span class="t" style="left:602.6px;top:162.8px;font-size:12px;line-height:12px;letter-spacing:-0.716px;word-spacing:0.716px;color:#000;">Free Space</span>
<span class="t" style="left:671.0px;top:162.8px;font-size:12px;line-height:12px;letter-spacing:-0.266px;word-spacing:0.266px;color:#000;">Percent Full</span>
<span class="t" style="left:748.9px;top:162.8px;font-size:12px;line-height:12px;letter-spacing:-0.364px;word-spacing:0.364px;color:#000;">Filesystem</span>
<span class="t" style="left:239.0px;top:190.3px;font-size:15px;line-height:15px;letter-spacing:-0.242px;word-spacing:0.242px;color:#2b5098;">Hard Disk Drives (1)</span>
<span class="t" style="left:239.0px;top:241.3px;font-size:15px;line-height:15px;letter-spacing:-0.106px;word-spacing:0.106px;color:#2b5098;">Network Locations (1)</span>
<span class="t" style="left:239.0px;top:216.8px;font-size:12px;line-height:12px;letter-spacing:-0.376px;word-spacing:0.376px;color:#1616a0;">Local Disk (C:)</span>
<span class="t" style="left:381.7px;top:216.8px;font-size:12px;line-height:12px;letter-spacing:-1.022px;word-spacing:1.022px;color:#1616a0;">98.4 GB</span>
<span class="t" style="left:430.9px;top:216.8px;font-size:12px;line-height:12px;letter-spacing:-0.284px;word-spacing:0.284px;color:#1616a0;">Local Drive (HDD)</span>
<span class="t" style="left:628.9px;top:216.8px;font-size:12px;line-height:12px;letter-spacing:-1.133px;word-spacing:1.133px;color:#1616a0;">61 GB</span>
<span class="t" style="left:747.0px;top:216.8px;font-size:12px;line-height:12px;letter-spacing:-1.236px;word-spacing:1.236px;color:#1616a0;">NTFS</span>
<span class="t" style="left:239.0px;top:267.8px;font-size:12px;line-height:12px;letter-spacing:0.084px;word-spacing:-0.084px;color:#1616a0;">Music (\\storage) (M:)</span>
<span class="t" style="left:384.1px;top:267.8px;font-size:12px;line-height:12px;letter-spacing:-1.052px;word-spacing:1.052px;color:#1616a0;">10.8 TB</span>
<span class="t" style="left:430.9px;top:267.8px;font-size:12px;line-height:12px;letter-spacing:-0.080px;word-spacing:0.080px;color:#1616a0;">Network Drive</span>
<span class="t" style="left:622.0px;top:267.8px;font-size:12px;line-height:12px;letter-spacing:-0.902px;word-spacing:0.902px;color:#1616a0;">9.44 TB</span>
<span class="t" style="left:747.0px;top:267.8px;font-size:12px;line-height:12px;letter-spacing:-1.236px;word-spacing:1.236px;color:#1616a0;">NTFS</span>
<span class="t" style="left:37.7px;top:156.8px;font-size:12px;line-height:12px;letter-spacing:0.171px;word-spacing:-0.171px;color:#000;">Home</span>
<span class="t" style="left:37.7px;top:189.8px;font-size:12px;line-height:12px;letter-spacing:-0.329px;word-spacing:0.329px;color:#000;">Favorites</span>
<span class="t" style="left:37.7px;top:222.8px;font-size:12px;line-height:12px;letter-spacing:-0.276px;word-spacing:0.276px;color:#000;">Desktop</span>
<span class="t" style="left:47.9px;top:242.8px;font-size:12px;line-height:12px;letter-spacing:-0.765px;word-spacing:0.765px;color:#000;">This PC</span>
<span class="t" style="left:47.9px;top:262.8px;font-size:12px;line-height:12px;letter-spacing:0.069px;word-spacing:-0.069px;color:#000;">Network</span>
<span class="t" style="left:47.9px;top:282.8px;font-size:12px;line-height:12px;letter-spacing:-0.436px;word-spacing:0.436px;color:#000;">Recycle Bin</span>
<span class="t" style="left:37.7px;top:315.8px;font-size:12px;line-height:12px;letter-spacing:-0.152px;word-spacing:0.152px;color:#000;">Cloud Storage</span>
<span class="t" style="left:37.7px;top:348.8px;font-size:12px;line-height:12px;letter-spacing:-0.197px;word-spacing:0.197px;color:#000;">Linux</span>
<span class="t" style="left:37.7px;top:381.8px;font-size:12px;line-height:12px;letter-spacing:-0.112px;word-spacing:0.112px;color:#000;">File Collections</span>
<span class="t" style="left:37.7px;top:414.8px;font-size:12px;line-height:12px;letter-spacing:-0.315px;word-spacing:0.315px;color:#000;">Libraries</span>
<span class="t" style="left:37.7px;top:447.8px;font-size:12px;line-height:12px;letter-spacing:-1.724px;word-spacing:1.724px;color:#000;">FTP</span>
<span class="t" style="left:237.4px;top:746.8px;font-size:12px;line-height:12px;letter-spacing:-0.748px;word-spacing:0.748px;color:#000;">This PC</span>
<span class="t" style="left:216.6px;top:772.8px;font-size:12px;line-height:12px;letter-spacing:-0.319px;word-spacing:0.319px;color:#000;">2 drives</span>
<span class="t" style="left:263.5px;top:772.8px;font-size:12px;line-height:12px;letter-spacing:-0.413px;word-spacing:0.413px;color:#000;">61 GB / 98.4 GB free local storage</span>
<div id="frame"></div>
</div>
</body></html>
